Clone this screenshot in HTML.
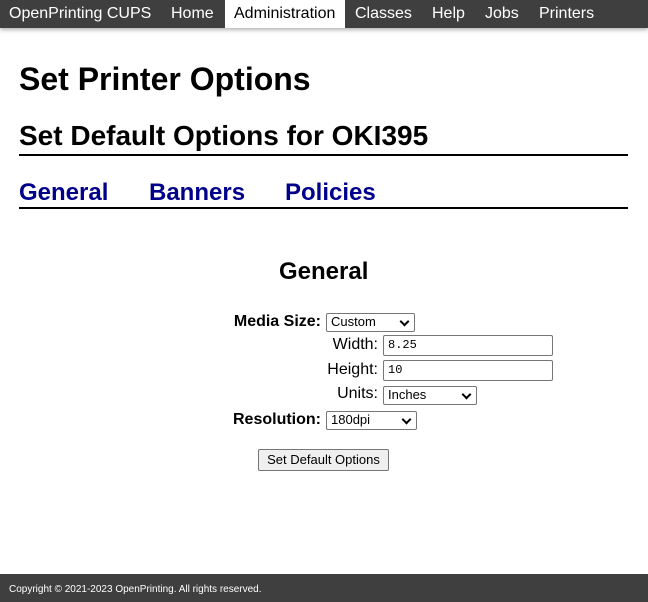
<!DOCTYPE html>
<html><head><style>
body{margin:0;width:648px;height:602px;position:relative;background:#fff;font-family:"Liberation Sans",Arial,sans-serif;overflow:hidden}
.a{position:absolute;white-space:nowrap}
.nav{position:absolute;left:0;top:0;width:648px;height:28px;background:#3f3f3f;box-shadow:0 2px 4px rgba(0,0,0,.3)}
.nav span{position:absolute;top:5px;color:#fff;font-size:16px}
.act{position:absolute;left:225px;top:0;width:120px;height:28px;background:#fff}
.tab{position:absolute;top:179px;color:#00008b;font-size:24px;font-weight:bold}
.line{position:absolute;left:19px;width:609px;height:2px;background:#000}
.lbl{position:absolute;font-size:16px;text-align:right}
.sel{position:absolute;border:1px solid #767676;border-radius:2px;background:#fff;font-size:13px;box-sizing:border-box;padding-left:4px;line-height:16px}
.sel:after{content:"";position:absolute;right:6px;top:4px;width:5px;height:5px;border-right:2px solid #000;border-bottom:2px solid #000;transform:rotate(45deg)}
.inp{position:absolute;border:1px solid #767676;border-radius:2px;box-sizing:border-box;font-family:"Liberation Mono",monospace;font-size:12px;padding-left:4px;line-height:18px}
</style></head><body>
<div class="nav"><div class="act"></div>
<span style="left:9px">OpenPrinting CUPS</span><span style="left:171px">Home</span><span style="left:234px;color:#000">Administration</span><span style="left:355px">Classes</span><span style="left:432px">Help</span><span style="left:485px">Jobs</span><span style="left:539px">Printers</span></div>
<div class="a" style="left:19px;top:61px;font-size:32px;font-weight:bold">Set Printer Options</div>
<div class="a" style="left:19px;top:120px;font-size:28px;font-weight:bold">Set Default Options for OKI395</div>
<div class="line" style="top:154px"></div>
<div class="tab" style="left:19px">General</div><div class="tab" style="left:149px">Banners</div><div class="tab" style="left:285px">Policies</div>
<div class="line" style="top:207px"></div>
<div class="a" style="left:279px;top:258px;font-size:24px;font-weight:bold">General</div>
<div class="lbl" style="right:327px;top:313px;font-weight:bold">Media Size:</div>
<div class="sel" style="left:326px;top:313px;width:89px;height:19px">Custom</div>
<div class="lbl" style="right:270px;top:336px">Width:</div>
<div class="inp" style="left:383px;top:335px;width:170px;height:21px">8.25</div>
<div class="lbl" style="right:270px;top:361px">Height:</div>
<div class="inp" style="left:383px;top:360px;width:170px;height:21px">10</div>
<div class="lbl" style="right:270px;top:385px">Units:</div>
<div class="sel" style="left:383px;top:386px;width:94px;height:19px">Inches</div>
<div class="lbl" style="right:327px;top:411px;font-weight:bold">Resolution:</div>
<div class="sel" style="left:326px;top:411px;width:91px;height:19px">180dpi</div>
<div class="a" style="left:258px;top:449px;width:131px;height:22px;box-sizing:border-box;border:1px solid #767676;border-radius:2px;background:#efefef;font-size:13px;text-align:center;line-height:20px">Set Default Options</div>
<div class="a" style="left:0;top:574px;width:648px;height:28px;background:#3f3f3f"></div>
<div class="a" style="left:9px;top:584px;font-size:10px;color:#fff">Copyright © 2021-2023 OpenPrinting. All rights reserved.</div>
</body></html>
